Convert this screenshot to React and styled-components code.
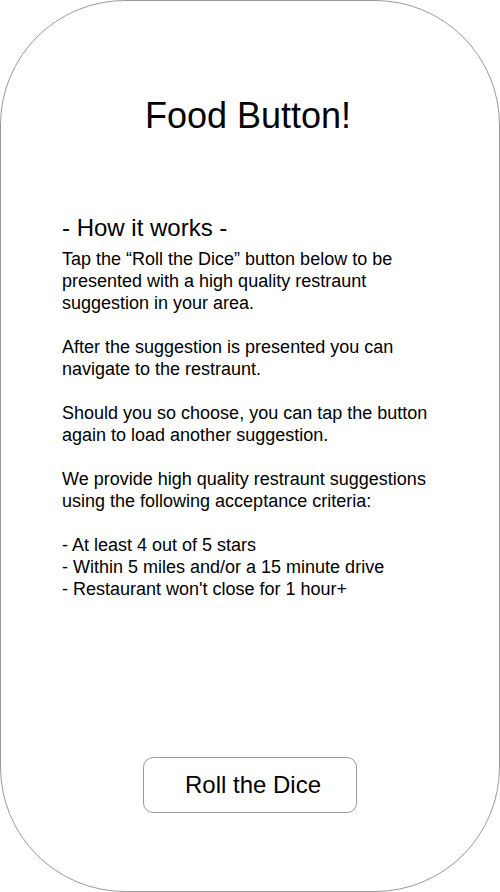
import React from 'react';
import styled, { createGlobalStyle } from 'styled-components';

const GlobalStyle = createGlobalStyle`
  html, body {
    margin: 0;
    padding: 0;
    background: #fff;
  }
  body {
    font-family: "Liberation Sans", Arial, sans-serif;
    color: #000;
  }
`;

const Frame = styled.div`
  width: 500px;
  height: 892px;
  box-sizing: border-box;
  border: 1px solid #9a9a9a;
  border-radius: 125px;
  background: #fff;
  display: flex;
  flex-direction: column;
  padding: 94px 0 78px;
`;

const Title = styled.h1`
  margin: 0;
  padding-right: 4px;
  font-size: 36px;
  line-height: 42px;
  font-weight: 400;
  text-align: center;
`;

const Section = styled.section`
  margin-top: 77px;
  padding: 0 62px 0 61px;
`;

const Heading = styled.h2`
  margin: 0 0 6px;
  font-size: 24px;
  line-height: 28px;
  font-weight: 400;
`;

const Paragraph = styled.p`
  margin: 0 0 22px;
  font-size: 18px;
  line-height: 22px;
`;

const ListLine = styled.div`
  font-size: 18px;
  line-height: 22px;
`;

const ButtonRow = styled.div`
  margin-top: auto;
  display: flex;
  justify-content: center;
`;

const DiceButton = styled.button`
  width: 214px;
  height: 56px;
  box-sizing: border-box;
  border: 1px solid #9a9a9a;
  border-radius: 10px;
  background: #fff;
  font-family: "Liberation Sans", Arial, sans-serif;
  font-size: 24px;
  color: #000;
  padding: 0 0 0 6px;
  cursor: pointer;
`;

const criteria = [
  '- At least 4 out of 5 stars',
  '- Within 5 miles and/or a 15 minute drive',
  "- Restaurant won't close for 1 hour+",
];

export default function App() {
  return (
    <>
      <GlobalStyle />
      <Frame>
        <Title>Food Button!</Title>
        <Section>
          <Heading>- How it works -</Heading>
          <Paragraph>
            Tap the “Roll the Dice” button below to be presented with a high quality restraunt
            suggestion in your area.
          </Paragraph>
          <Paragraph>After the suggestion is presented you can navigate to the restraunt.</Paragraph>
          <Paragraph>
            Should you so choose, you can tap the button again to load another suggestion.
          </Paragraph>
          <Paragraph>
            We provide high quality restraunt suggestions using the following acceptance criteria:
          </Paragraph>
          {criteria.map((c) => (
            <ListLine key={c}>{c}</ListLine>
          ))}
        </Section>
        <ButtonRow>
          <DiceButton>Roll the Dice</DiceButton>
        </ButtonRow>
      </Frame>
    </>
  );
}
